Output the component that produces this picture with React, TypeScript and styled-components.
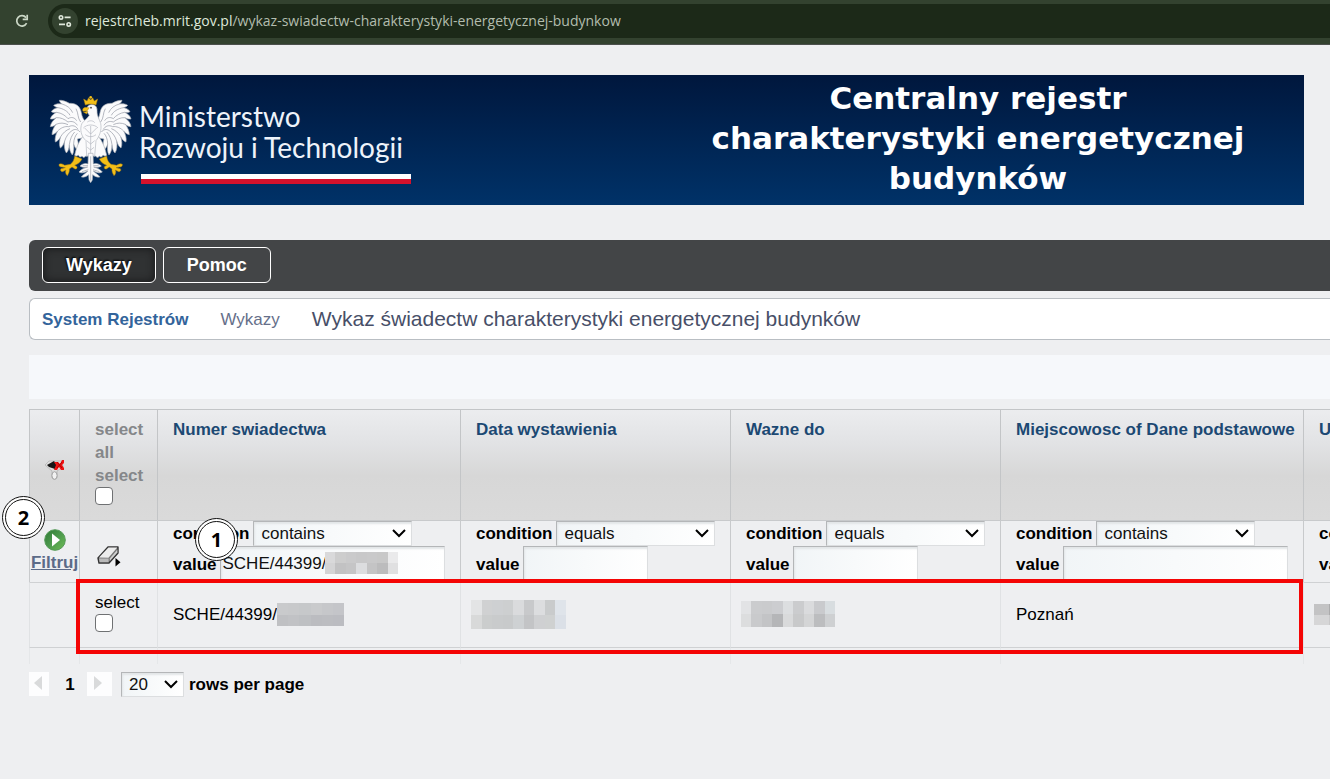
import React from "react";
import styled, { createGlobalStyle, css } from "styled-components";

const GlobalStyle = createGlobalStyle`
  *, *::before, *::after { box-sizing: border-box; }
  body {
    margin: 0;
    background: #eeeff1;
    color: #000;
    font-family: "Liberation Sans", Arial, sans-serif;
    font-size: 17px;
    line-height: 23px;
  }
`;

const Page = styled.div`
  min-height: 100vh;
  overflow: hidden;
`;

/* ---------- browser bar ---------- */

const BrowserBar = styled.header`
  display: flex;
  align-items: center;
  gap: 18px;
  height: 45px;
  padding: 0 0 3px 14px;
  background: #33422f;
  border-bottom: 1px solid #4b4f4c;
`;

const IconButton = styled.button`
  display: flex;
  align-items: center;
  justify-content: center;
  padding: 0;
  border: 0;
  background: none;
`;

const AddressField = styled.div`
  display: flex;
  flex: 1;
  align-items: center;
  gap: 7px;
  height: 34px;
  padding-left: 4px;
  border-radius: 17px 0 0 17px;
  background: #1c2918;
`;

const SiteInfo = styled(IconButton)`
  width: 26px;
  height: 26px;
  border-radius: 50%;
  background: #33422f;
`;

const Address = styled.span`
  color: #b3bdae;
  font-family: "Open Sans", sans-serif;
  font-size: 14px;
  line-height: 20px;
  white-space: nowrap;
`;

const Domain = styled.span`
  color: #dfe8da;
`;

/* ---------- banner ---------- */

const Banner = styled.div`
  display: flex;
  align-items: center;
  justify-content: space-between;
  height: 130px;
  margin: 30px 26px 35px 29px;
  padding: 0 26px 0 20px;
  background: linear-gradient(#00173d, #003268);
  color: #fff;
`;

const Ministry = styled.div`
  display: flex;
  align-items: center;
  gap: 6px;
`;

const MinistryName = styled.div`
  display: flex;
  flex-direction: column;
  padding-top: 4px;
  font-family: Lato, sans-serif;
  font-size: 28px;
  line-height: 31px;
  color: #eef3fa;
  white-space: nowrap;
`;

const Flag = styled.div`
  width: 270px;
  height: 10px;
  margin: 11px 0 0 2px;
  background: linear-gradient(#fff 50%, #d4122c 50%);
`;

const BannerTitle = styled.h1`
  width: 600px;
  margin: 0 0 4px;
  font-family: "DejaVu Sans", Verdana, sans-serif;
  font-size: 31px;
  line-height: 40px;
  font-weight: 700;
  text-align: center;
`;

/* ---------- navigation ---------- */

const Content = styled.main`
  padding-left: 29px;
`;

const Menu = styled.nav`
  display: flex;
  gap: 7px;
  height: 51px;
  padding: 7px 13px;
  border-radius: 6px 0 0 6px;
  background: #434547;
`;

const MenuButton = styled.button<{ $active?: boolean }>`
  height: 36px;
  padding: 0 23px;
  border: 1px solid #fff;
  border-radius: 6px;
  background: transparent;
  color: #fff;
  font: bold 18px "Liberation Sans", Arial, sans-serif;
  ${(p) =>
    p.$active &&
    css`
      background: #303233;
      box-shadow: inset 0 0 8px #151617;
      text-shadow: -1px -1px 2px #000;
    `}
`;

const Breadcrumbs = styled.nav`
  display: flex;
  align-items: center;
  gap: 32px;
  height: 42px;
  margin-top: 7px;
  padding-left: 12px;
  border: 1px solid #b9bec3;
  border-right: 0;
  border-radius: 6px 0 0 6px;
  background: #fff;
  white-space: nowrap;
`;

const Crumb = styled.a<{ $strong?: boolean }>`
  color: ${(p) => (p.$strong ? "#33649b" : "#66708a")};
  font-weight: ${(p) => (p.$strong ? 700 : 400)};
  text-decoration: none;
`;

const CurrentPage = styled.h2`
  margin: 0;
  color: #484f68;
  font-size: 21px;
  line-height: 28px;
  font-weight: 400;
`;

const Toolbar = styled.div`
  height: 44px;
  margin: 15px 0 10px;
  background: #f6f8fb;
`;

/* ---------- register table ---------- */

const TableArea = styled.section`
  position: relative;
`;

const Register = styled.table`
  width: 1577px;
  table-layout: fixed;
  border-collapse: separate;
  border-spacing: 0;
  text-align: left;
`;

const Col = styled.col<{ $width: number }>`
  width: ${(p) => p.$width}px;
`;

const HeaderRow = styled.tr`
  height: 111px;
  background: linear-gradient(#ecedef, #e2e3e5 30%, #d7d7d7 60%, #dadada);
`;

const HeaderCell = styled.th<{ $muted?: boolean; $icon?: boolean }>`
  padding: ${(p) => (p.$icon ? "16px 0 0 1px" : "8px 0 0 15px")};
  border-top: 1px solid #c3c5c7;
  border-left: 1px solid #c3c5c7;
  color: ${(p) => (p.$muted ? "#85878a" : "#1c4973")};
  text-align: ${(p) => (p.$icon ? "center" : "left")};
  vertical-align: ${(p) => (p.$icon ? "middle" : "top")};
  white-space: ${(p) => (p.$muted ? "normal" : "nowrap")};
`;

const FilterCell = styled.td<{ $kind?: "run" | "clear" }>`
  height: 62px;
  padding: ${(p) => (p.$kind === "run" ? "8px 0 0" : p.$kind === "clear" ? "24px 0 0 17px" : "0 0 0 15px")};
  border-top: 1px solid #c8cacc;
  border-left: 1px solid #c8cacc;
  vertical-align: top;
`;

const DataCell = styled.td<{ $masked?: boolean }>`
  height: 65px;
  padding: 0 0 2px ${(p) => (p.$masked ? 10 : 15)}px;
  border-top: 1px solid #cfd1d3;
  border-left: 1px solid #e0e2e4;
  vertical-align: middle;
`;

const TickCell = styled(DataCell)`
  padding-top: 8px;
  vertical-align: top;
`;

const TailCell = styled.td`
  height: 17px;
  padding: 0;
  border-top: 1px solid #cfd1d3;
  border-left: 1px solid #e5e7e9;
`;

const TickLabel = styled.label`
  display: flex;
  flex-direction: column;
`;

const Tick = styled.input`
  appearance: none;
  width: 18px;
  height: 18px;
  margin: 0;
  border: 1px solid #6f7173;
  border-radius: 4px;
  background: #fff;
`;

const FilterAction = styled.div`
  display: flex;
  flex-direction: column;
  align-items: center;
`;

const FilterLink = styled.a`
  color: #5c6b88;
  font-weight: 700;
`;

const FieldRow = styled.div<{ $height: number }>`
  display: flex;
  align-items: center;
  gap: 4px;
  height: ${(p) => p.$height}px;
`;

const FieldLabel = styled.label`
  font-weight: 700;
`;

const fieldLook = css`
  border: 1px solid #dcdee0;
  border-top-color: #b4b6b8;
  border-left-color: #b4b6b8;
  border-radius: 0;
  background: linear-gradient(90deg, #f1f5f7, #fff);
  box-shadow: inset 1px 2px 2px #e2e5e7;
  color: #111;
  font: 17px "Liberation Sans", Arial, sans-serif;
`;

const SelectWrap = styled.div<{ $width: number }>`
  position: relative;
  width: ${(p) => p.$width}px;
  flex: none;
  svg {
    position: absolute;
    top: 8px;
    right: 6px;
    pointer-events: none;
  }
`;

const SelectBox = styled.select`
  ${fieldLook}
  appearance: none;
  display: block;
  width: 100%;
  height: 25px;
  padding: 0 0 0 7px;
`;

const InputWrap = styled.div`
  position: relative;
  flex: none;
`;

const TextBox = styled.input<{ $width: number }>`
  ${fieldLook}
  display: block;
  width: ${(p) => p.$width}px;
  height: 36px;
  padding: 0 1px;
`;

const InputMask = styled.div`
  position: absolute;
  top: 6px;
  left: 105px;
  display: flex;
`;

const MaskedValue = styled.div`
  display: flex;
  align-items: center;
`;

/* ---------- pager ---------- */

const Pager = styled.div`
  display: flex;
  align-items: center;
  height: 26px;
  margin-top: 7px;
  font-weight: 700;
`;

const PageButton = styled.button<{ $width: number }>`
  width: ${(p) => p.$width}px;
  height: 24px;
  padding: 0 3px 0 0;
  border: 0;
  background: #fdfdfe;
`;

const PageNumber = styled.span`
  width: 38px;
  padding-left: 4px;
  text-align: center;
`;

const PageSize = styled.div`
  display: flex;
  align-items: center;
  gap: 5px;
  margin-left: 9px;
`;

/* ---------- annotations over the table ---------- */

const Highlight = styled.div`
  position: absolute;
  top: 170px;
  left: 47px;
  width: 1227px;
  height: 75px;
  border: 4px solid #f40505;
  pointer-events: none;
`;

const Marker = styled.div<{ $x: number; $y: number }>`
  position: absolute;
  left: ${(p) => p.$x}px;
  top: ${(p) => p.$y}px;
  display: flex;
  align-items: center;
  justify-content: center;
  width: 43px;
  height: 43px;
  border: 4px double #111;
  border-radius: 50%;
  background: #fff;
  font: bold 20px "Open Sans", sans-serif;
`;

/* ---------- drawings ---------- */

const Chevron = () => (
  <svg width="14" height="9" viewBox="0 0 14 9" fill="none" stroke="#000" strokeWidth="2">
    <path d="M1 1 L7 7 L13 1" />
  </svg>
);

const ReloadIcon = () => (
  <svg width="16" height="16" viewBox="0 0 16 16" fill="none" stroke="#cbd7c6" strokeWidth="1.7">
    <path d="M12.6 10.2 A5.2 5.2 0 1 1 12 4.6" />
    <path d="M13.2 1.8 V6.3 H8.7" />
  </svg>
);

const TuneIcon = () => (
  <svg width="14" height="14" viewBox="0 0 14 14" fill="none" stroke="#e0e8dc" strokeWidth="1.6">
    <circle cx="3" cy="3.4" r="1.7" />
    <path d="M6.6 3.4 H12.6 M1 10.4 H7" />
    <circle cx="10.7" cy="10.4" r="1.7" />
  </svg>
);

const leftWing =
  "M140 112 C132 108 126 98 124 84 C121 64 106 55 88 56 C78 50 66 46 58 47 C59 52 62 55 66 58 C56 56 46 58 41 62 C44 66 49 68 54 69 C45 70 37 75 34 81 C39 84 45 84 50 83 C41 87 33 94 31 103 C38 104 44 102 49 99 C40 106 32 115 31 126 C38 126 44 123 48 119 C41 128 36 140 36 150 C43 149 49 144 53 139 C47 149 44 162 46 172 C53 170 58 163 62 156 C58 168 57 181 61 190 C68 186 71 178 74 169 C72 182 73 196 79 205 C85 200 87 190 88 180 C88 193 91 204 97 211 C102 203 102 190 101 178 C104 188 109 194 113 196 C116 184 115 172 112 163 L140 158 Z";

const feathers =
  "M66 58 C80 62 92 70 98 84 M54 69 C70 72 84 80 90 92 M50 83 C64 85 76 92 84 102 M49 99 C62 98 74 104 84 112 M48 119 C60 114 72 114 84 120 M53 139 C62 130 74 124 86 126 M62 156 C68 146 78 136 90 132 M74 169 C78 156 86 144 96 138 M88 180 C90 164 96 150 104 142 M101 178 C101 164 106 152 112 146 M84 102 C94 96 104 98 110 108 M84 112 C96 108 106 112 112 122 M86 126 C98 120 108 124 114 134 M96 138 C104 132 114 134 120 142 M108 72 C116 86 112 100 122 112";

const leftLeg =
  "M104 214 L126 223 C122 232 113 239 104 242 L111 246 C112 251 109 254 105 253 L96 247 L88 253 C89 260 86 267 82 273 C77 269 75 262 78 256 L68 261 C62 261 60 256 63 252 L76 249 L66 247 C60 248 56 244 57 239 C62 235 69 238 74 242 L91 239 C98 234 103 225 104 214 Z";

const Eagle = () => (
  <svg width="84" height="90" viewBox="27 31 252 270" role="img" aria-label="Godło Polski">
    {[undefined, "matrix(-1 0 0 1 304 0)"].map((mirror, i) => (
      <g key={i} transform={mirror}>
        <path d={leftWing} fill="#fbfbfc" stroke="#a9adb5" strokeWidth="2" />
        <path d={feathers} fill="none" stroke="#9a9ea8" strokeWidth="2.2" />
        <path d={leftLeg} fill="#f3bf18" stroke="#a77c12" strokeWidth="1.5" />
        <path
          d="M128 156 C116 170 108 192 104 212 C108 216 112 214 115 211 C117 217 122 219 126 214 C129 220 134 219 137 214 C140 216 144 214 146 210 L148 160 Z"
          fill="#fbfbfc"
          stroke="#a9adb5"
          strokeWidth="2"
        />
      </g>
    ))}
    <path
      d="M140 80 C138 72 142 62 152 60 C164 58 172 66 171 78 C170 92 178 104 182 116 C186 136 178 156 168 168 L164 214 H140 L138 168 C124 156 118 134 126 116 C132 108 140 104 148 92 Z"
      fill="#fbfbfc"
      stroke="#b4b8c0"
      strokeWidth="2"
    />
    <path
      d="M130 130 C140 118 164 118 174 130 M134 130 L152 148 L170 130 M152 124 V210 M136 150 C146 158 158 158 168 150 M140 168 L152 178 L164 168 M142 188 L152 196 L162 188 M142 112 C150 106 160 108 164 114"
      fill="none"
      stroke="#b0b4bc"
      strokeWidth="2"
    />
    <path
      d="M145 206 H159 L160 238 C168 234 178 238 184 244 C176 250 168 248 161 247 C170 250 182 254 187 262 C178 268 168 262 160 259 C166 266 176 270 180 277 C170 279 163 274 158 270 L157 286 L152 294 L147 286 L146 270 C141 274 134 279 124 277 C128 270 138 266 144 259 C136 262 126 268 117 262 C122 254 134 250 143 247 C136 248 128 250 120 244 C126 238 136 234 144 238 Z"
      fill="#fbfbfc"
      stroke="#a9adb5"
      strokeWidth="2"
    />
    <path d="M152 215 V288 M128 243 H144 M160 243 H176 M126 261 L145 255 M159 255 L178 261" fill="none" stroke="#9a9ea8" strokeWidth="2" />
    <path d="M148 69 L135 68 C128 70 126 76 129 80 L142 78 Z M130 82 L144 80 L140 88 Z" fill="#f3bf18" stroke="#a77c12" strokeWidth="1" />
    <circle cx="153" cy="69" r="2.5" fill="#333" />
    <path
      d="M136 61 L131 43 L141 49 L146 39 L152 46 L158 39 L163 49 L173 43 L168 61 C158 57 146 57 136 61 Z"
      fill="#f3bf18"
      stroke="#a77c12"
      strokeWidth="1.5"
    />
    <circle cx="152" cy="38" r="4" fill="#f3bf18" />
  </svg>
);

const ClearFilterIcon = () => (
  <svg width="20" height="22" viewBox="0 0 20 22" role="img" aria-label="Wyczyść filtr">
    <path d="M0 6 L4 2 H17 L18 8 L12 12 V18 C12 21 7 21 7 18 V12 Z" fill="#dedede" stroke="#b5b5b5" strokeWidth="0.8" />
    <ellipse cx="9.5" cy="16.5" rx="2.6" ry="3.8" fill="#f2f2f2" stroke="#a2a2a2" />
    <path d="M2 6 L9 2 L12 6 L10 10 L4 8 Z" fill="#151515" />
    <path d="M9 3 H13 L15 5 L17 1 H19 V4 L17 6 L19 9 V11 H16 L14 8 L12 11 H9 L11 6 Z" fill="#ee1111" />
    <path d="M12 3 L17 9 M17 3 L12 9" stroke="#b00000" strokeWidth="1" />
  </svg>
);

const PlayIcon = () => (
  <svg width="22" height="22" viewBox="0 0 22 22">
    <defs>
      <linearGradient id="play" x1="0" y1="0" x2="1" y2="1">
        <stop offset="0" stopColor="#2f7a36" />
        <stop offset="0.5" stopColor="#4d9a4d" />
        <stop offset="1" stopColor="#6fbd55" />
      </linearGradient>
    </defs>
    <circle cx="11" cy="11" r="10.3" fill="url(#play)" stroke="#559a58" />
    <path d="M8 4.5 L16 11 L8 17.5 Z" fill="#fff" />
  </svg>
);

const EraserIcon = () => (
  <svg width="24" height="22" viewBox="0 0 24 22">
    <path d="M1 13 L11 2 H21 V8 L12 18 H2 Z" fill="#777" stroke="#333" strokeWidth="1.4" strokeLinejoin="round" />
    <path d="M2 12.5 L11.5 2.6 H20.3 L11.5 12.8 Z" fill="#ececec" />
    <path d="M2 13.6 H11.6 V17.2 H2.6 Z" fill="#b9b9b9" />
    <path d="M12.8 13.4 L20.4 4.6 V7.6 L12.8 16 Z" fill="#d0d0d0" />
    <path d="M18.5 13 L23.5 17.3 L18.5 21.5 Z" fill="#000" />
  </svg>
);

const ArrowIcon = ({ left }: { left?: boolean }) => (
  <svg width="8" height="14" viewBox="0 0 8 14">
    <path d={left ? "M8 0 V14 L0 7 Z" : "M0 0 V14 L8 7 Z"} fill="#d9dadb" />
  </svg>
);

const Mosaic = ({ width, height, rows }: { width: number; height: number; rows: string[] }) => {
  const grid = rows.map((r) => r.split(" "));
  return (
    <svg
      width={width}
      height={height}
      viewBox={`0 0 ${grid[0].length} ${grid.length}`}
      preserveAspectRatio="none"
      shapeRendering="crispEdges"
      aria-hidden="true"
    >
      {grid.map((cells, y) =>
        cells.map((c, x) => <rect key={`${x}-${y}`} x={x} y={y} width="1" height="1" fill={`#${c}`} />)
      )}
    </svg>
  );
};

/* ---------- table parts ---------- */

type Column = { name: string; id: string; condition: string; box: number; value?: string };

const columns: Column[] = [
  { name: "Numer swiadectwa", id: "numer", condition: "contains", box: 225, value: "SCHE/44399/" },
  { name: "Data wystawienia", id: "data", condition: "equals", box: 125 },
  { name: "Wazne do", id: "wazne", condition: "equals", box: 125 },
  { name: "Miejscowosc of Dane podstawowe", id: "miejscowosc", condition: "contains", box: 225 },
  { name: "Ulica of Dane podstawowe", id: "ulica", condition: "contains", box: 225 },
];

const widths = [50, 78, 303, 270, 270, 303, 303];

const Filter = ({ column }: { column: Column }) => (
  <FilterCell>
    <FieldRow $height={25}>
      <FieldLabel htmlFor={`${column.id}-condition`}>condition</FieldLabel>
      <SelectWrap $width={159}>
        <SelectBox id={`${column.id}-condition`} defaultValue={column.condition}>
          <option>contains</option>
          <option>equals</option>
        </SelectBox>
        <Chevron />
      </SelectWrap>
    </FieldRow>
    <FieldRow $height={36}>
      <FieldLabel htmlFor={`${column.id}-value`}>value</FieldLabel>
      <InputWrap>
        <TextBox id={`${column.id}-value`} $width={column.box} defaultValue={column.value} />
        {column.value && (
          <InputMask>
            <Mosaic
              width={73}
              height={22}
              rows={[
                "d9d9da cdcdcd cacacb c8c8c9 c9c9ca c8c8c8 eaeaeb",
                "d4d4d5 c2c2c3 c5c5c6 dcdddf c4c4c5 bcbcbd e0e0e1",
              ]}
            />
          </InputMask>
        )}
      </InputWrap>
    </FieldRow>
  </FilterCell>
);

export default function App() {
  return (
    <Page>
      <GlobalStyle />
      <BrowserBar>
        <IconButton aria-label="Odśwież">
          <ReloadIcon />
        </IconButton>
        <AddressField>
          <SiteInfo aria-label="Informacje o witrynie">
            <TuneIcon />
          </SiteInfo>
          <Address>
            <Domain>rejestrcheb.mrit.gov.pl</Domain>/wykaz-swiadectw-charakterystyki-energetycznej-budynkow
          </Address>
        </AddressField>
      </BrowserBar>

      <Banner>
        <Ministry>
          <Eagle />
          <MinistryName>
            <span>Ministerstwo</span>
            <span>Rozwoju i Technologii</span>
            <Flag />
          </MinistryName>
        </Ministry>
        <BannerTitle>
          Centralny rejestr
          <br />
          charakterystyki energetycznej
          <br />
          budynków
        </BannerTitle>
      </Banner>

      <Content>
        <Menu>
          <MenuButton $active>Wykazy</MenuButton>
          <MenuButton>Pomoc</MenuButton>
        </Menu>
        <Breadcrumbs>
          <Crumb href="#" $strong>
            System Rejestrów
          </Crumb>
          <Crumb href="#">Wykazy</Crumb>
          <CurrentPage>Wykaz świadectw charakterystyki energetycznej budynków</CurrentPage>
        </Breadcrumbs>
        <Toolbar />

        <TableArea>
          <Register>
            <colgroup>
              {widths.map((w, i) => (
                <Col key={i} $width={w} />
              ))}
            </colgroup>
            <thead>
              <HeaderRow>
                <HeaderCell $icon>
                  <ClearFilterIcon />
                </HeaderCell>
                <HeaderCell $muted>
                  <TickLabel>
                    select all select
                    <Tick type="checkbox" />
                  </TickLabel>
                </HeaderCell>
                {columns.map((c) => (
                  <HeaderCell key={c.id}>{c.name}</HeaderCell>
                ))}
              </HeaderRow>
            </thead>
            <tbody>
              <tr>
                <FilterCell $kind="run">
                  <FilterAction>
                    <PlayIcon />
                    <FilterLink href="#">Filtruj</FilterLink>
                  </FilterAction>
                </FilterCell>
                <FilterCell $kind="clear">
                  <IconButton aria-label="Wyczyść">
                    <EraserIcon />
                  </IconButton>
                </FilterCell>
                {columns.map((c) => (
                  <Filter key={c.id} column={c} />
                ))}
              </tr>
              <tr>
                <DataCell />
                <TickCell>
                  <TickLabel>
                    select
                    <Tick type="checkbox" />
                  </TickLabel>
                </TickCell>
                <DataCell>
                  <MaskedValue>
                    SCHE/44399/
                    <Mosaic
                      width={67}
                      height={23}
                      rows={["c9cacc c8c9cb c6c8ca c9cacc c6c7ca c4c5c9", "bfc0c3 c1c2c5 bec0c3 bbbcc0 bcbdc1 bbbcc1"]}
                    />
                  </MaskedValue>
                </DataCell>
                <DataCell $masked>
                  <MaskedValue>
                    <Mosaic
                      width={95}
                      height={29}
                      rows={[
                        "e3e4e5 d0d1d2 ced0d2 cdcfd0 dadbdd c8c9cb dcdddf c9cbcc dfe4ea",
                        "d8d9d9 cbcdcd c9cbcc c8cacb ced1d3 c3c4c6 cfd0d2 cfd1d1 dbe0e7",
                      ]}
                    />
                  </MaskedValue>
                </DataCell>
                <DataCell $masked>
                  <MaskedValue>
                    <Mosaic
                      width={94}
                      height={26}
                      rows={[
                        "e2e3e5 cbccce cacbcd cccdd0 dcdee0 cbccce dadbdd c9cacd d8dde0",
                        "dcddde c9cacc c3c4c6 b5b6b8 d9dadb c8c9ca d4d5d6 bcbdbf ced0d2",
                      ]}
                    />
                  </MaskedValue>
                </DataCell>
                <DataCell>Poznań</DataCell>
                <DataCell $masked>
                  <MaskedValue>
                    <Mosaic width={90} height={21} rows={["c3c3c4 ababac c6c6c7 bdbdbe c9c9ca cfcfd0", "d6d6d7 c9c9ca d1d1d2 c8c8c9 d4d4d5 dadadb"]} />
                  </MaskedValue>
                </DataCell>
              </tr>
              <tr>
                {widths.map((_, i) => (
                  <TailCell key={i} />
                ))}
              </tr>
            </tbody>
          </Register>
          <Highlight />
          <Marker $x={166} $y={109}>
            1
          </Marker>
          <Marker $x={-27} $y={87}>
            2
          </Marker>
        </TableArea>

        <Pager>
          <PageButton $width={20} aria-label="Poprzednia strona">
            <ArrowIcon left />
          </PageButton>
          <PageNumber>1</PageNumber>
          <PageButton $width={25} aria-label="Następna strona">
            <ArrowIcon />
          </PageButton>
          <PageSize>
            <SelectWrap $width={63}>
              <SelectBox id="page-size" defaultValue="20">
                <option>20</option>
                <option>50</option>
              </SelectBox>
              <Chevron />
            </SelectWrap>
            <FieldLabel htmlFor="page-size">rows per page</FieldLabel>
          </PageSize>
        </Pager>
      </Content>
    </Page>
  );
}
